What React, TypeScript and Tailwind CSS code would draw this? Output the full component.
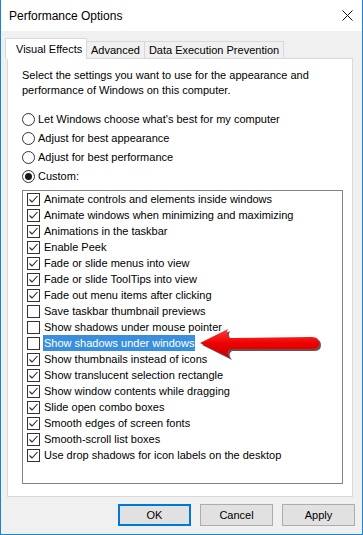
import React from "react";

const items = [
  { label: "Animate controls and elements inside windows", checked: true },
  { label: "Animate windows when minimizing and maximizing", checked: true },
  { label: "Animations in the taskbar", checked: true },
  { label: "Enable Peek", checked: true },
  { label: "Fade or slide menus into view", checked: true },
  { label: "Fade or slide ToolTips into view", checked: true },
  { label: "Fade out menu items after clicking", checked: true },
  { label: "Save taskbar thumbnail previews", checked: false },
  { label: "Show shadows under mouse pointer", checked: false },
  { label: "Show shadows under windows", checked: false, selected: true },
  { label: "Show thumbnails instead of icons", checked: true },
  { label: "Show translucent selection rectangle", checked: true },
  { label: "Show window contents while dragging", checked: true },
  { label: "Slide open combo boxes", checked: true },
  { label: "Smooth edges of screen fonts", checked: true },
  { label: "Smooth-scroll list boxes", checked: true },
  { label: "Use drop shadows for icon labels on the desktop", checked: true },
];

const radios = [
  { label: "Let Windows choose what's best for my computer", on: false },
  { label: "Adjust for best appearance", on: false },
  { label: "Adjust for best performance", on: false },
  { label: "Custom:", on: true },
];

function Check({ checked }: { checked: boolean }) {
  return (
    <div className="w-[13px] h-[13px] border border-[#333] bg-white flex items-center justify-center shrink-0">
      {checked && (
        <svg width="11" height="11" viewBox="0 0 11 11">
          <polyline points="1.5,5.5 4,8 9.5,2" fill="none" stroke="#222" strokeWidth="1.1" />
        </svg>
      )}
    </div>
  );
}

function Radio({ on }: { on: boolean }) {
  return (
    <div className="w-[13px] h-[13px] rounded-full border border-[#333] bg-white flex items-center justify-center shrink-0">
      {on && <div className="w-[7px] h-[7px] rounded-full bg-[#1a1a1a]" />}
    </div>
  );
}

function Arrow() {
  return (
    <svg className="absolute left-[196px] top-[326px]" width="126" height="36" viewBox="196 326 126 36">
      <defs>
        <linearGradient id="red" x1="0" y1="0" x2="0" y2="1">
          <stop offset="0" stopColor="#ff3b3b" />
          <stop offset="0.5" stopColor="#ee0000" />
          <stop offset="1" stopColor="#c40000" />
        </linearGradient>
      </defs>
      <path
        d="M201,345 L229,331 Q226,337 231,340 L313,339 Q320,339 320,345 Q320,351 313,351 L231,351 Q226,354 231,360 Z"
        fill="#3a0000"
        opacity="0.7"
      />
      <path
        d="M199,343 L227,329 Q224,335 229,338 L311,337 Q318,337 318,343 Q318,349 311,349 L229,349 Q224,352 229,358 Z"
        fill="url(#red)"
      />
    </svg>
  );
}

export default function App() {
  return (
    <div className="relative w-[363px] h-[535px] flex flex-col bg-[#f0f0f0] border-x border-b border-[#1883d7] text-[11px] text-black font-['Segoe_UI','Liberation_Sans',sans-serif] overflow-hidden whitespace-nowrap">
      <div className="h-[31px] bg-white flex items-center justify-between pl-[8px] pr-[9px] shrink-0">
        <span className="text-[12px] leading-none">Performance Options</span>
        <svg width="11" height="11" viewBox="0 0 11 11">
          <path d="M0.5,0.5 L10.5,10.5 M10.5,0.5 L0.5,10.5" stroke="#111" strokeWidth="1" />
        </svg>
      </div>

      <div className="flex items-end h-[20px] mt-[7px] ml-[4px] shrink-0">
        <div className="relative z-10 h-[21px] -mb-px w-[82px] bg-white border-x border-t border-[#d9d9d9] flex items-center pl-[10px] leading-none">
          Visual Effects
        </div>
        <div className="h-[17px] w-[58px] border-t border-r border-[#d9d9d9] flex items-center justify-center leading-none">
          Advanced
        </div>
        <div className="h-[17px] w-[139px] border-t border-r border-[#d9d9d9] flex items-center justify-center leading-none">
          Data Execution Prevention
        </div>
      </div>

      <div className="ml-[6px] w-[346px] h-[439px] bg-white border border-[#d9d9d9] pt-[9px] pl-[14px] flex flex-col shrink-0">
        <p className="leading-[15px]">
          Select the settings you want to use for the appearance and
          <br />
          performance of Windows on this computer.
        </p>
        <div className="mt-[12px] flex flex-col">
          {radios.map((r) => (
            <div key={r.label} className="h-[19px] flex items-center gap-[3px]">
              <Radio on={r.on} />
              <span className="leading-none">{r.label}</span>
            </div>
          ))}
        </div>
        <div className="mt-[4px] w-[321px] h-[294px] border border-[#828282] flex flex-col pl-[4px]">
          {items.map((it) => (
            <div key={it.label} className="h-[16px] flex items-center shrink-0">
              <Check checked={it.checked} />
              <span
                className={
                  it.selected
                    ? "ml-[3px] px-[1px] h-[16px] flex items-center bg-[#3a8fdc] text-white leading-none"
                    : "ml-[4px] leading-none"
                }
              >
                {it.label}
              </span>
            </div>
          ))}
        </div>
      </div>

      <div className="flex justify-end gap-[9px] mt-[7px] pr-[7px] shrink-0">
        <button className="w-[73px] h-[22px] bg-[#e1e1e1] border-2 border-[#0078d7] leading-none">OK</button>
        <button className="w-[73px] h-[22px] bg-[#e1e1e1] border border-[#adadad] leading-none">Cancel</button>
        <button className="w-[73px] h-[22px] bg-[#e1e1e1] border border-[#adadad] leading-none">Apply</button>
      </div>

      <Arrow />
    </div>
  );
}
